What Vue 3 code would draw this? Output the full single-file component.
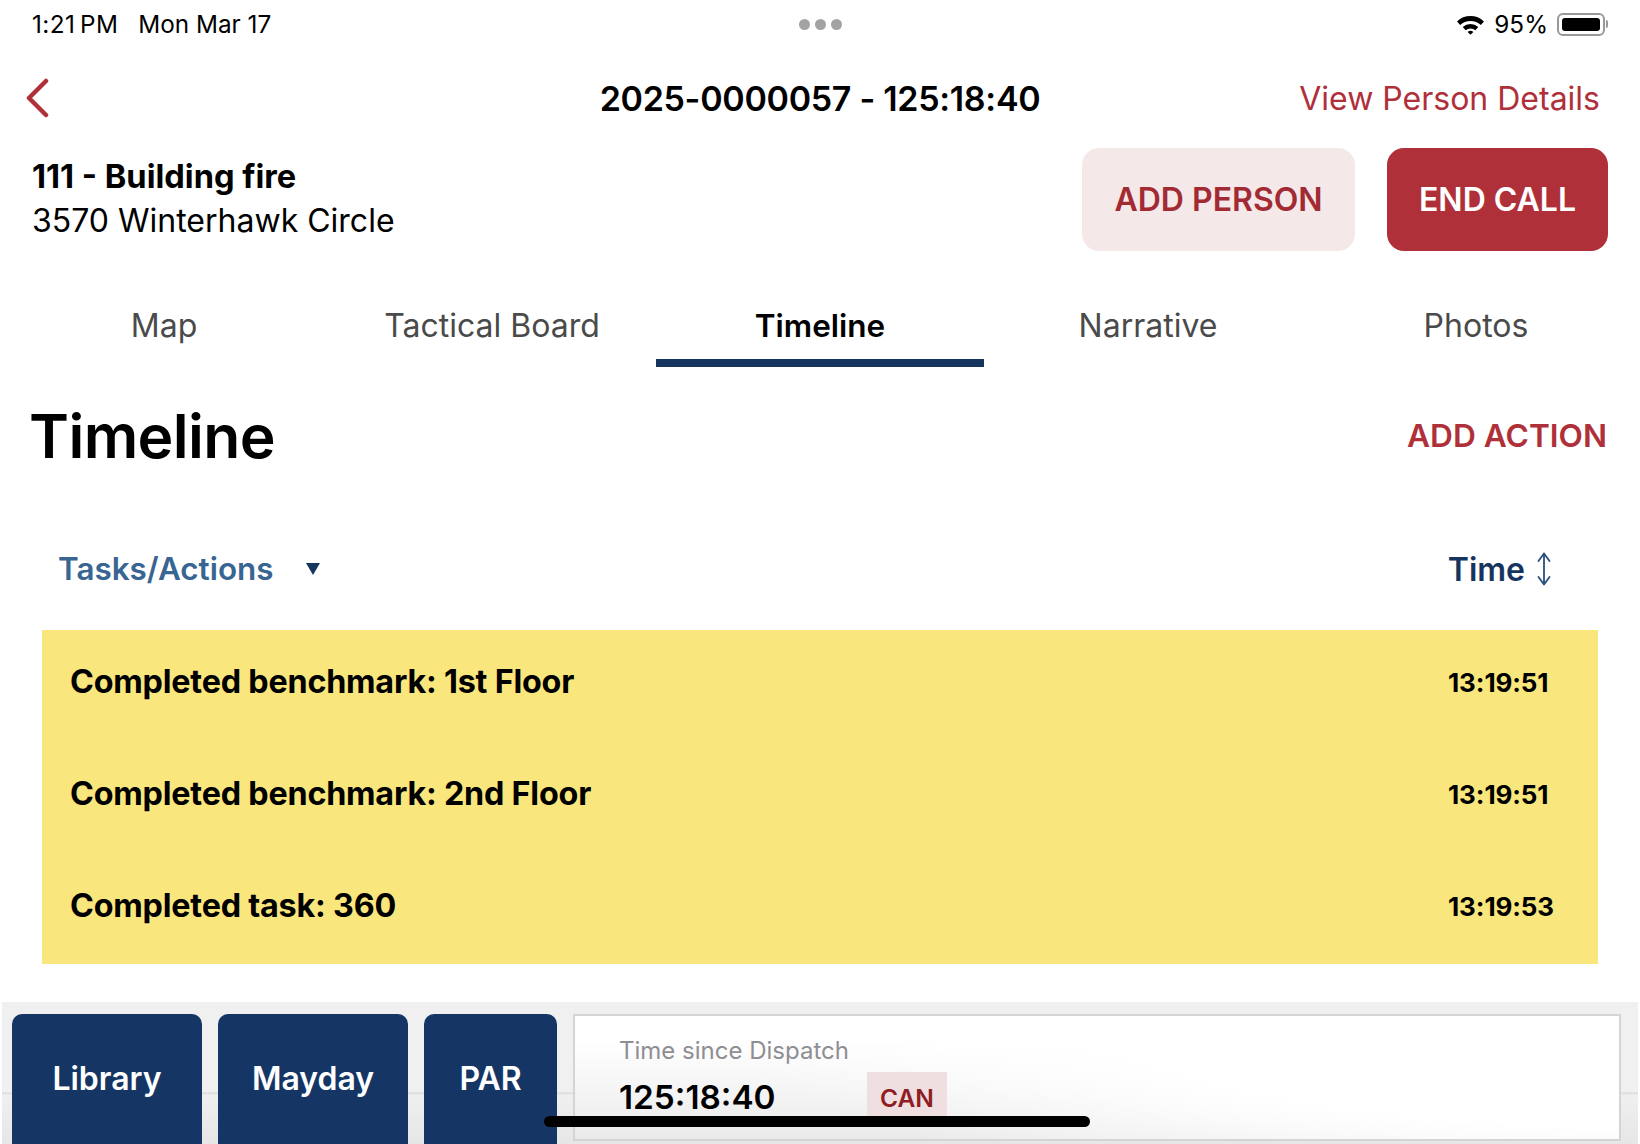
<script setup>
const tabs = [
  { label: 'Map' },
  { label: 'Tactical Board' },
  { label: 'Timeline', active: true },
  { label: 'Narrative' },
  { label: 'Photos' }
]
const rows = [
  { text: 'Completed benchmark: 1st Floor', time: '13:19:51' },
  { text: 'Completed benchmark: 2nd Floor', time: '13:19:51' },
  { text: 'Completed task: 360', time: '13:19:53' }
]
</script>
<template>
  <div class="screen">
    <div class="status">
      <div class="status-left">
        <span class="clock">1:21&#8201;PM</span>
        <span>Mon Mar 17</span>
      </div>
      <div class="dots"><i></i><i></i><i></i></div>
      <div class="status-right">
        <svg width="29" height="21" viewBox="0 0 28 20">
          <path d="M1 7 A19 19 0 0 1 27 7 L24 10.5 A14.5 14.5 0 0 0 4 10.5 Z" fill="#000" />
          <path d="M6.5 12.5 A11 11 0 0 1 21.5 12.5 L18.7 15.6 A7 7 0 0 0 9.3 15.6 Z" fill="#000" />
          <path d="M11.2 17.3 A4 4 0 0 1 16.8 17.3 L14 20 Z" fill="#000" />
        </svg>
        <span class="pct">95%</span>
        <div class="battery"><div class="battery-fill"></div></div>
        <div class="battery-tip"></div>
      </div>
    </div>

    <div class="nav">
      <svg class="back" width="26" height="40" viewBox="0 0 26 40">
        <path d="M22 3 L5 20 L22 37" fill="none" stroke="#b0303a" stroke-width="4.5" stroke-linecap="round" stroke-linejoin="round" />
      </svg>
      <div class="nav-title">2025-0000057 - 125:18:40</div>
      <div class="nav-link">View Person Details</div>
    </div>

    <div class="info">
      <div class="info-text">
        <div class="info-code">111 - Building fire</div>
        <div class="info-addr">3570 Winterhawk Circle</div>
      </div>
      <div class="info-btns">
        <div class="btn btn-light">ADD PERSON</div>
        <div class="btn btn-red">END CALL</div>
      </div>
    </div>

    <div class="tabs">
      <div v-for="tab in tabs" :key="tab.label" class="tab" :class="{ active: tab.active }">
        {{ tab.label }}
      </div>
    </div>

    <div class="heading">
      <h1>Timeline</h1>
      <div class="add-action">ADD ACTION</div>
    </div>

    <div class="table-head">
      <div class="head-left">
        <span class="head-tasks">Tasks/Actions</span>
        <svg width="14" height="14" viewBox="0 0 14 14"><path d="M0 1 H14 L7 13 Z" fill="#15355f" /></svg>
      </div>
      <div class="head-right">
        <span class="head-time">Time</span>
        <svg width="14" height="34" viewBox="0 0 14 34">
          <path d="M1.5 9 L7 1.5 L12.5 9 M7 1.5 V32.5 M1.5 25 L7 32.5 L12.5 25" fill="none" stroke="#2b4f7c" stroke-width="1.8" stroke-linecap="round" stroke-linejoin="round" />
        </svg>
      </div>
    </div>

    <div class="rows">
      <div v-for="row in rows" :key="row.text + row.time" class="row">
        <span class="row-text">{{ row.text }}</span>
        <span class="row-time">{{ row.time }}</span>
      </div>
    </div>

    <div class="bottom">
      <div class="bottom-btn wide">Library</div>
      <div class="bottom-btn wide">Mayday</div>
      <div class="bottom-btn narrow">PAR</div>
      <div class="panel">
        <div class="panel-label">Time since Dispatch</div>
        <div class="panel-line">
          <span class="panel-time">125:18:40</span>
          <span class="panel-tag">CAN</span>
        </div>
      </div>
    </div>

    <div class="home-bar"></div>
  </div>
</template>
<style scoped>
.screen {
  position: relative;
  width: 1640px;
  height: 1144px;
  overflow: hidden;
  background: #fff;
  color: #000;
  font-family: Inter, "Liberation Sans", sans-serif;
}
.status {
  height: 48px;
  padding: 0 32px;
  display: grid;
  grid-template-columns: minmax(0, 1fr) auto minmax(0, 1fr);
  align-items: center;
  font-size: 24.3px;
}
.status-left {
  display: flex;
  gap: 20px;
}
.clock {
  letter-spacing: 0.4px;
}
.dots {
  display: flex;
  gap: 5px;
}
.dots i {
  width: 11px;
  height: 11px;
  border-radius: 50%;
  background: #a3a3a3;
}
.status-right {
  display: flex;
  align-items: center;
  justify-content: flex-end;
}
.pct {
  margin: 0 9px;
}
.battery {
  width: 48px;
  height: 23px;
  padding: 3px;
  border: 2px solid #999;
  border-radius: 6px;
  box-sizing: border-box;
}
.battery-fill {
  width: 100%;
  height: 100%;
  background: #000;
  border-radius: 3px;
}
.battery-tip {
  width: 2px;
  height: 8px;
  margin-left: 1px;
  background: #999;
  border-radius: 0 2px 2px 0;
}
.nav {
  height: 100px;
  padding: 0 40px;
  display: grid;
  grid-template-columns: minmax(0, 1fr) auto minmax(0, 1fr);
  align-items: center;
}
.back {
  display: block;
  margin-left: -16px;
}
.nav-title {
  font-size: 34px;
  font-weight: 600;
  letter-spacing: -0.3px;
}
.nav-link {
  justify-self: end;
  font-size: 32px;
  color: #b0303a;
  white-space: nowrap;
}
.info {
  height: 103px;
  padding: 0 32px;
  display: flex;
  justify-content: space-between;
  align-items: center;
}
.info-text {
  margin-top: -2px;
}
.info-code {
  font-size: 32.6px;
  font-weight: 700;
  line-height: 44px;
}
.info-addr {
  margin-top: 1px;
  font-size: 32px;
  line-height: 44px;
}
.info-btns {
  display: flex;
  gap: 32px;
}
.btn {
  height: 103px;
  display: flex;
  align-items: center;
  justify-content: center;
  border-radius: 17px;
  font-size: 32px;
  font-weight: 600;
}
.btn-light {
  width: 273px;
  background: #f5e8e9;
  color: #a12a33;
}
.btn-red {
  width: 221px;
  background: #b0303a;
  color: #fff;
}
.tabs {
  margin-top: 33px;
  display: grid;
  grid-template-columns: repeat(5, 1fr);
}
.tab {
  height: 83px;
  padding-top: 7px;
  box-sizing: border-box;
  display: flex;
  align-items: center;
  justify-content: center;
  font-size: 32px;
  color: #4a4a4a;
  border-bottom: 8px solid transparent;
}
.tab.active {
  color: #000;
  font-size: 31.5px;
  font-weight: 600;
  border-bottom-color: #15355f;
}
.heading {
  height: 137px;
  padding: 0 33px 0 29px;
  display: flex;
  justify-content: space-between;
  align-items: center;
}
.heading h1 {
  margin: 0;
  font-size: 60.6px;
  font-weight: 600;
  letter-spacing: -0.6px;
}
.add-action {
  font-size: 31.7px;
  font-weight: 600;
  color: #b0303a;
}
.table-head {
  height: 126px;
  padding: 4px 89px 0 58px;
  box-sizing: border-box;
  display: flex;
  justify-content: space-between;
  align-items: center;
}
.head-left {
  display: flex;
  align-items: center;
  gap: 33px;
}
.head-tasks {
  font-size: 31.4px;
  font-weight: 600;
  color: #386591;
}
.head-right {
  display: flex;
  align-items: center;
  gap: 12px;
}
.head-time {
  font-size: 32px;
  font-weight: 600;
  color: #15355f;
}
.rows {
  margin: 0 42px;
  background: #f9e67c;
}
.row {
  height: 112px;
  padding: 0 45px 10px 28px;
  box-sizing: border-box;
  display: flex;
  justify-content: space-between;
  align-items: center;
}
.row:last-child {
  height: 110px;
  padding-bottom: 8px;
}
.row-text {
  font-size: 32.3px;
  font-weight: 700;
  letter-spacing: -0.2px;
}
.row-time {
  width: 105px;
  margin-top: 3px;
  font-size: 26px;
  font-weight: 700;
  letter-spacing: -0.1px;
  white-space: nowrap;
}
.bottom {
  margin: 38px 2px 0;
  height: 142px;
  padding: 12px 17px 0 10px;
  display: flex;
  gap: 16px;
  background: linear-gradient(#f0f0f0 0, #f0f0f0 90px, #d8d8d8 91px, #efefef 93px, #e4e4e4 100%);
  border-radius: 0 0 10px 0;
}
.bottom-btn {
  height: 140px;
  padding-bottom: 12px;
  box-sizing: border-box;
  background: #153664;
  color: #fff;
  border-radius: 10px 10px 0 0;
  display: flex;
  align-items: center;
  justify-content: center;
  font-size: 32px;
  font-weight: 600;
}
.wide {
  width: 190px;
}
.narrow {
  width: 133px;
}
.panel {
  flex: 1;
  height: 127px;
  padding: 20px 44px;
  box-sizing: border-box;
  border: 2px solid #d4d4d4;
  background:
    radial-gradient(ellipse 900px 200px at 100% 0, #fff 55%, rgba(255, 255, 255, 0) 100%),
    linear-gradient(#fff 20%, #eaeaea 100%);
}
.panel-label {
  font-size: 24px;
  line-height: 30px;
  color: #8e8e93;
}
.panel-line {
  display: flex;
  align-items: flex-start;
  margin-top: 2px;
}
.panel-time {
  width: 248px;
  margin-top: 9px;
  font-size: 33.3px;
  font-weight: 600;
}
.panel-tag {
  padding: 11px 13px;
  height: 52px;
  box-sizing: border-box;
  margin-top: 4px;
  background: #efdfe0;
  color: #8f1d24;
  font-size: 24.5px;
  font-weight: 600;
}
.home-bar {
  position: absolute;
  left: 544px;
  top: 1116px;
  width: 546px;
  height: 11px;
  border-radius: 6px;
  background: #000;
}
</style>
<style>
html, body {
  margin: 0;
  background: #fff;
}
</style>
